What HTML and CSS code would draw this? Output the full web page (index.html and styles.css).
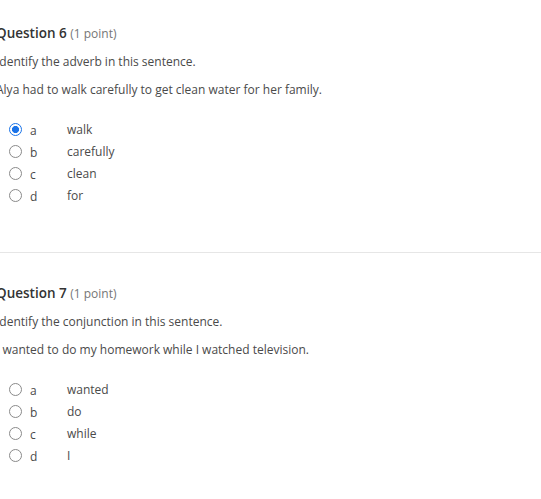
FILE: index.html
```html
<!DOCTYPE html>
<html>
<head>
<meta charset="utf-8">
<link rel="stylesheet" href="styles.css">
</head>
<body>
<div class="page">
  <section class="question">
    <h2 class="q-title">Question 6 <span class="points">(1 point)</span></h2>
    <p class="q-text">Identify the adverb in this sentence.</p>
    <p class="q-text">Alya had to walk carefully to get clean water for her family.</p>
    <ul class="options">
      <li class="option"><span class="radio checked"></span><span class="letter">a</span><span class="answer">walk</span></li>
      <li class="option"><span class="radio"></span><span class="letter">b</span><span class="answer">carefully</span></li>
      <li class="option"><span class="radio"></span><span class="letter">c</span><span class="answer">clean</span></li>
      <li class="option"><span class="radio"></span><span class="letter">d</span><span class="answer">for</span></li>
    </ul>
  </section>
  <hr class="divider">
  <section class="question">
    <h2 class="q-title">Question 7 <span class="points">(1 point)</span></h2>
    <p class="q-text">Identify the conjunction in this sentence.</p>
    <p class="q-text">I wanted to do my homework while I watched television.</p>
    <ul class="options">
      <li class="option"><span class="radio"></span><span class="letter">a</span><span class="answer">wanted</span></li>
      <li class="option"><span class="radio"></span><span class="letter">b</span><span class="answer">do</span></li>
      <li class="option"><span class="radio"></span><span class="letter">c</span><span class="answer">while</span></li>
      <li class="option"><span class="radio"></span><span class="letter">d</span><span class="answer">I</span></li>
    </ul>
  </section>
</div>
</body>
</html>
```
FILE: styles.css
```css
html, body {
  margin: 0;
  padding: 0;
  background: #fff;
}
body {
  font-family: "Open Sans", "Liberation Sans", sans-serif;
  color: #4a4a4a;
  overflow: hidden;
}
.page {
  width: 545px;
  margin-left: -4px;
  padding-top: 22px;
}
.q-title {
  margin: 0;
  font-size: 13.5px;
  font-weight: 600;
  color: #333;
  line-height: 22px;
}
.points {
  font-size: 12px;
  font-weight: 400;
  color: #767676;
}
.q-text {
  margin: 6px 0 0 0;
  font-size: 12px;
  line-height: 22px;
}
.options {
  list-style: none;
  margin: 17px 0 0 0;
  padding: 0;
}
.option {
  display: flex;
  align-items: center;
  height: 22px;
  font-size: 12px;
}
.radio {
  box-sizing: border-box;
  width: 13px;
  height: 13px;
  border: 1px solid #8a8a8a;
  border-radius: 50%;
  margin-left: 13px;
  background: #fff;
}
.radio.checked {
  border: 1.5px solid #1a73e8;
  background: radial-gradient(circle, #1a73e8 0 3.3px, #fff 3.8px);
}
.letter {
  margin-left: 8px;
  width: 37px;
  padding-top: 2px;
}
.answer {
  flex: 1;
}
.divider {
  border: 0;
  border-top: 1px solid #e6e6e6;
  margin: 46px 0 29px 0;
  height: 0;
}
```
